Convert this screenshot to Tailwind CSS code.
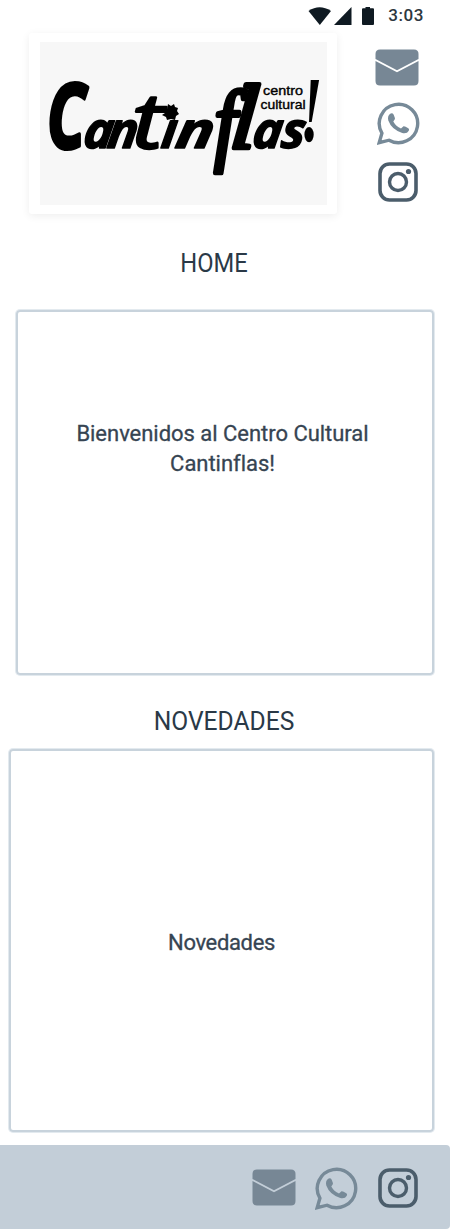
<!DOCTYPE html>
<html lang="es">
<head>
<meta charset="utf-8">
<meta name="viewport" content="width=device-width, initial-scale=1">
<title>Centro Cultural Cantinflas</title>
<script src="https://cdn.jsdelivr.net/npm/@tailwindcss/browser@4"></script>
</head>
<body class="bg-white">
<svg class="hidden">
  <symbol id="mail" viewBox="0 0 44 37">
    <path d="M5 .5H39Q43.500 .5 43.500 5V10L22 21.300.500 10V5Q.500 .500 5 .500Z"/>
    <path d="M.500 12 22 23.200 43.500 12V32Q43.500 36.500 39 36.500H5Q.500 36.500 .500 32Z"/>
  </symbol>
  <symbol id="whatsapp" viewBox="0 0 43 43">
    <path d="M2.200 40.600 4.900 31.200A19.200 19.200 0 1 1 12 38.200Z" fill="none" stroke="currentColor" stroke-width="3.400" stroke-linejoin="miter"/>
    <path d="M13.200 11.700Q15.600 10.700 16.700 12.700L18 16.200Q18.200 17.300 16.300 19.400Q18.900 24.200 24 26.400L26.500 24.300Q27.500 23.800 31.300 26.200Q32.600 27 31.800 28.700Q30 32 25.300 31Q14.500 27.500 11.300 18.500Q10.200 13.900 13.200 11.700Z"/>
  </symbol>
  <symbol id="instagram" viewBox="0 0 40 40">
    <rect x="2" y="2" width="36" height="36" rx="9.500" fill="none" stroke="currentColor" stroke-width="3.600"/>
    <circle cx="20" cy="20" r="8.500" fill="none" stroke="currentColor" stroke-width="3.400"/>
    <circle cx="30.500" cy="9.500" r="2.600"/>
  </symbol>
</svg>
<main class="flex h-[1230px] w-[450px] flex-col overflow-hidden bg-white font-['Roboto',sans-serif] text-[#364452]">
  <div class="flex h-[31px] shrink-0 items-center justify-end pr-[26px] text-[#0f1a22]">
    <svg class="h-[18px] w-[68px]" viewBox="0 0 68 18" fill="currentColor">
      <path d="M.500 4Q11.500-3.500 23 4L11.800 18Z"/>
      <path d="M43.500 0V18H26Z"/>
      <path d="M57.500 1.200V0H62V1.200H65Q66 1.200 66 2.200V17Q66 18 65 18H55Q54 18 54 17V2.200Q54 1.200 55 1.200Z"/>
    </svg>
    <span class="ml-[12px] text-[17px] leading-none font-medium tracking-[0.6px] text-[#2d3740]">3:03</span>
  </div>
  <header class="flex h-[184px] shrink-0 pl-[29px]">
    <div class="mt-[2px] h-[181px] w-[308px] rounded-[3px] bg-white px-[11px] pt-[9px] shadow-[0_2px_8px_rgba(0,0,0,0.07)]">
      <svg class="h-[163px] w-[287px] bg-[#f7f7f7]" viewBox="0 0 287 163" fill="#000" stroke="#000" stroke-linejoin="round" stroke-linecap="round" font-family="Open Sans" font-weight="bold" font-style="italic">
        <text transform="translate(7 106) scale(.700 1)" font-size="90" stroke-width="4">C</text>
        <text transform="translate(42 106) skewX(-8)" font-size="50" stroke-width="1.500">a</text>
        <text transform="translate(66 106) skewX(-8)" font-size="50" stroke-width="1.500">n</text>
        <text transform="translate(92 106) scale(1.250 1)" font-size="76" font-weight="normal" stroke-width="2.500">t</text>
        <text transform="translate(120 106) skewX(-8)" font-size="50" stroke-width="1.500">ı</text>
        <text transform="translate(134 106) scale(1.250 1) skewX(-8)" font-size="50" stroke-width="1.500">n</text>
        <text transform="translate(174 112) scale(.900 1)" font-family="Liberation Serif" font-weight="normal" font-size="91" stroke-width="4.500">f</text>
        <text transform="translate(189 106) skewX(-6)" font-family="Liberation Serif" font-weight="normal" font-size="92" stroke-width="4.500">l</text>
        <text transform="translate(211 106) skewX(-8)" font-size="50" stroke-width="1.500">a</text>
        <text transform="translate(240 106) skewX(-8)" font-size="50" stroke-width="1.500">s</text>
        <text transform="translate(260 99) scale(.620 1)" font-family="Liberation Serif" font-size="93" stroke-width="0">!</text>
        <path stroke="none" d="M128 62l3 2 3-2 1 3 3 1-1 3 2 3-3 2-1 4-4-1-4 1-1-3-4-2 3-2-2-4 4 0Z"/>
        <g font-family="Liberation Sans" font-weight="normal" font-style="normal" stroke-width=".4">
          <text x="223" y="53" font-size="13.500" textLength="40" lengthAdjust="spacingAndGlyphs">centro</text>
          <text x="220.500" y="67" font-size="13.500" textLength="45" lengthAdjust="spacingAndGlyphs">cultural</text>
        </g>
      </svg>
    </div>
    <nav class="ml-[38px] flex flex-col items-center pt-[18px]">
      <svg class="mr-px h-[37px] w-[44px] fill-[#778795]"><use href="#mail"/></svg>
      <svg class="mt-[16px] ml-px h-[43px] w-[43px] fill-[#778a98] text-[#778a98]"><use href="#whatsapp"/></svg>
      <svg class="mt-[17px] h-[40px] w-[40px] fill-[#4b5d6b] text-[#4b5d6b]"><use href="#instagram"/></svg>
    </nav>
  </header>
  <h1 class="mt-[33px] h-[30px] w-[428px] shrink-0 scale-x-[0.930] text-center text-[25.500px] leading-[30px] text-[#2a3947]">HOME</h1>
  <section class="mt-[32px] ml-[16px] flex h-[365px] w-[418px] shrink-0 flex-col items-center rounded-[4px] border-2 border-[#c8d3dc] pt-[107px] shadow-[0_0_0_1px_#e3eaef]">
    <p class="mr-[5px] w-[310px] text-center text-[22px] leading-[30px] tracking-[-0.030px] [-webkit-text-stroke:0.3px]">Bienvenidos al Centro Cultural Cantinflas!</p>
  </section>
  <h2 class="mt-[31px] h-[30px] w-[448px] shrink-0 scale-x-[0.965] text-center text-[25.500px] leading-[30px] text-[#2a3947]">NOVEDADES</h2>
  <section class="mt-[13px] ml-[9px] flex h-[383px] w-[425px] shrink-0 items-center justify-center rounded-[4px] border-2 border-[#c8d3dc] shadow-[0_0_0_1px_#e3eaef]">
    <p class="mt-[4px] text-[22px] leading-[30px] tracking-[-0.350px] [-webkit-text-stroke:0.3px]">Novedades</p>
  </section>
  <footer class="mt-[13px] flex h-[84px] shrink-0 items-center justify-end rounded-r-[4px] bg-[#c3ced8] pr-[32px]">
    <svg class="h-[37px] w-[44px] fill-[#778795]"><use href="#mail"/></svg>
    <svg class="mt-[2px] ml-[19px] h-[43px] w-[43px] fill-[#778a98] text-[#778a98]"><use href="#whatsapp"/></svg>
    <svg class="mt-px ml-[20px] h-[40px] w-[40px] fill-[#4b5d6b] text-[#4b5d6b]"><use href="#instagram"/></svg>
  </footer>
</main>
</body>
</html>
